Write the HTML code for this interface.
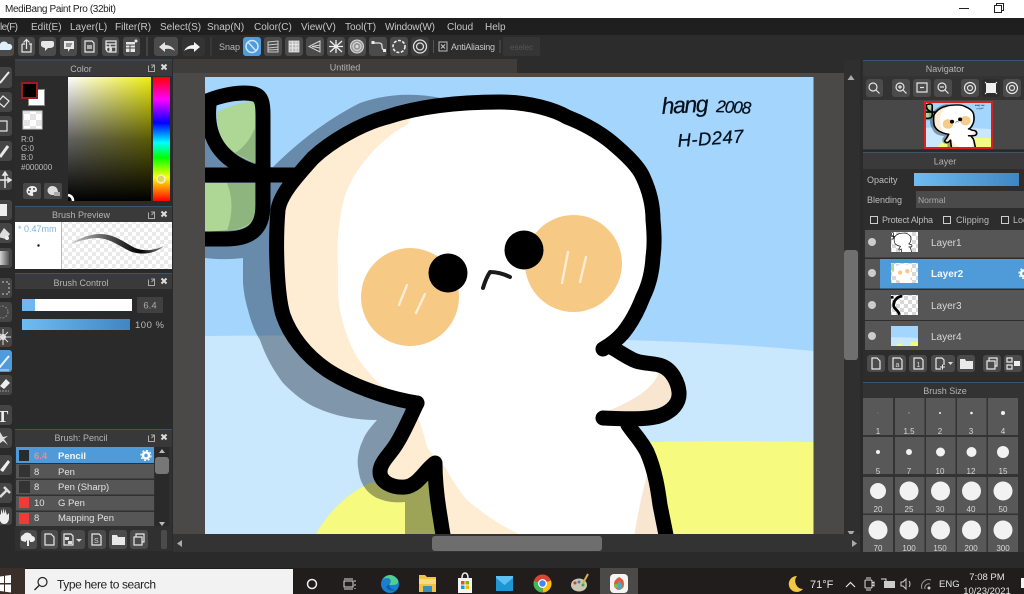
<!DOCTYPE html>
<html lang="en"><head><meta charset="utf-8"><title>MediBang Paint Pro</title>
<style>
html,body{margin:0;padding:0;background:#2a2a2a;width:1024px;height:594px;overflow:hidden}
svg{display:block;filter:blur(.35px);font-family:"Liberation Sans",sans-serif}
.m{font-size:10px;fill:#c6c6c6}
.h{font-size:9px;fill:#b4b4b4;text-anchor:middle}
.l{font-size:9px;fill:#bdbdbd}
.n{font-size:9.5px;fill:#e2e2e2}
.s{font-size:8px;fill:#d8d8d8;text-anchor:middle}
.b{fill:#4b4b4b}
.w{fill:none;stroke:#e8e8e8;stroke-width:1.2}
.f{fill:#e8e8e8}
</style></head><body>
<svg width="1024" height="594" viewBox="0 0 1024 594" xmlns="http://www.w3.org/2000/svg">
<defs>
<pattern id="chk" width="12" height="12" patternUnits="userSpaceOnUse"><rect width="12" height="12" fill="#fff"/><rect width="6" height="6" fill="#e4e4e4"/><rect x="6" y="6" width="6" height="6" fill="#e4e4e4"/></pattern>
<pattern id="chk2" width="8" height="8" patternUnits="userSpaceOnUse"><rect width="8" height="8" fill="#fff"/><rect width="4" height="4" fill="#d8d8d8"/><rect x="4" y="4" width="4" height="4" fill="#d8d8d8"/></pattern>
<linearGradient id="sv1"><stop offset="0" stop-color="#fff"/><stop offset="1" stop-color="#eeee10"/></linearGradient>
<linearGradient id="sv2" x2="0" y2="1"><stop offset="0" stop-color="#000" stop-opacity="0"/><stop offset=".5" stop-color="#000" stop-opacity=".62"/><stop offset="1" stop-color="#000"/></linearGradient>
<linearGradient id="hue" x2="0" y2="1"><stop offset="0" stop-color="#f00"/><stop offset=".18" stop-color="#f0f"/><stop offset=".37" stop-color="#00f"/><stop offset=".53" stop-color="#0ff"/><stop offset=".65" stop-color="#0f0"/><stop offset=".81" stop-color="#ff0"/><stop offset="1" stop-color="#f00"/></linearGradient>
<linearGradient id="blu"><stop offset="0" stop-color="#6fbcf2"/><stop offset="1" stop-color="#3f86c4"/></linearGradient>
<linearGradient id="strk"><stop offset="0" stop-color="#ccc"/><stop offset=".4" stop-color="#555"/><stop offset=".75" stop-color="#000"/><stop offset="1" stop-color="#888"/></linearGradient>
<linearGradient id="gr" x2="1" y2="0"><stop offset="0" stop-color="#eee"/><stop offset="1" stop-color="#555"/></linearGradient>
<clipPath id="cv"><rect x="205" y="77" width="608.5" height="457"/></clipPath>
<clipPath id="bodyc"><use href="#body"/></clipPath>
<path id="body" d="M417 403C385 398 350 385 327 370C305 355 290 335 283 315C277 295 275 245 278 210C280 195 295 178 313 158C330 142 360 124 387 117C420 106 460 102 500 102C530 102 555 110 567 117C590 126 605 136 617 147C632 160 640 170 643 177C650 192 653 205 653 220C655 240 654 250 653 257C652 275 648 287 643 297C638 310 632 322 623 333C617 340 610 345 603 349L611 347C620 352 628 358 636 361C645 364 655 363 662 366C672 370 678 382 679 392C680 403 672 411 662 415C650 420 625 419 603 418L628 425C635 435 642 442 647 452C655 470 658 490 660 505C662 515 664 525 667 540L444 540L439 510L435 463C425 470 418 486 405 487C392 488 380 482 380 472C380 462 390 455 397 443C405 430 412 413 417 403Z"/>
<path id="shad" d="M445 99C415 92 385 94 360 103C330 118 300 140 273 167L262 167L205 130L205 258C220 260 235 259 243 258L243 283C244 295 246 303 248 310C251 322 255 332 260 340C267 360 275 372 283 383C295 395 305 403 317 408C335 416 355 420 377 420C370 428 365 434 363 440C358 450 357 460 358 467C359 474 360 479 362 483C366 491 371 495 377 498C386 502 395 503 405 502L405 540L450 540L500 300Z"/>
<g id="bg"><rect x="205" y="77" width="609" height="460" fill="#a3d5fd"/><path d="M205 336C300 335 400 335 500 336C560 337 600 339 627 340C660 341 690 342 720 344C760 346 790 349 814 351V540H205Z" fill="#c9e7fd"/><path d="M650 442C700 441 760 441 814 442V540H640ZM313 540C325 515 345 495 370 483L460 480L450 540Z" fill="#f6fb80"/></g>
<g id="lines" fill="none" stroke="#000" stroke-width="15" stroke-linecap="round" stroke-linejoin="round">
<path d="M417 403C385 398 350 385 327 370C305 355 290 335 283 315C277 295 275 245 278 210C280 195 295 178 313 158C330 142 360 124 387 117C420 106 460 102 500 102C530 102 555 110 567 117C590 126 605 136 617 147C632 160 640 170 643 177C650 192 653 205 653 220C655 240 654 250 653 257C652 275 648 287 643 297C638 310 632 322 623 333C617 340 610 345 603 349"/>
<path d="M611 347C620 352 628 358 636 361C645 364 655 363 662 366C672 370 678 382 679 392C680 403 672 411 662 415C650 420 625 419 603 418"/>
<path d="M628 425C635 435 642 442 647 452C655 470 658 490 660 505C662 515 664 525 667 540"/>
<path d="M417 403C412 413 405 430 397 443C390 455 380 462 380 472C380 482 392 488 405 487C418 486 425 470 435 463C435 480 437 497 439 510C441 522 442 530 444 540"/>
<path d="M198 105C225 92 245 92 254 94C262 96 263 104 263 115V205C263 230 250 239 225 239H198"/>
<path d="M198 175H296" stroke-linecap="butt"/>
<path d="M209 105C206 135 218 160 255 172"/>
</g>
<g id="art" clip-path="url(#cv)">
<use href="#bg"/>
<use href="#shad" fill="#a3a7ad" style="mix-blend-mode:multiply"/>
<path d="M217 112Q236 103 255 101V163Q232 155 222 140Q217 128 217 112Z" fill="#aed695"/>
<path d="M255 128V163L235 153Q248 145 255 128Z" fill="#8eb57e"/>
<path d="M200 183H255V217Q250 228 235 230L200 232Z" fill="#aed695"/>
<path d="M227 183H255V217Q250 228 227 231Q236 205 227 183Z" fill="#8eb57e"/>
<use href="#body" fill="#fff"/>
<g clip-path="url(#bodyc)">
<path d="M407 125C385 135 350 170 343 203C337 230 337 250 338 270C338 290 338 300 340 310C344 330 350 345 357 357C367 372 377 382 387 390C400 398 410 408 418 417C423 430 425 440 427 447C433 456 440 462 445 467C452 480 460 492 467 500C485 515 500 525 517 533L520 545H240V100H420Z" fill="#feecd3"/>
<path d="M633 545C636 520 642 495 648 470L690 545Z" fill="#f8e6d0"/>
<path d="M659 372C655 385 640 398 608 411L690 418V370Z" fill="#f8e6d0"/>
</g>
<circle cx="410" cy="297" r="49" fill="#f6c985"/><circle cx="573.5" cy="263.5" r="48.5" fill="#f6c985"/>
<path d="M407 285L399 305M425 294L416 313M568 252L562 283M586 257L580 282" stroke="#feecd3" stroke-width="2.4" stroke-linecap="round" fill="none"/>
<circle cx="448" cy="273" r="19.5"/><circle cx="524" cy="250" r="19.5"/>
<path d="M483 288Q486 278 490 272Q500 272 510 277" fill="none" stroke="#1a1a1a" stroke-width="4" stroke-linecap="round" stroke-linejoin="round"/>
<use href="#lines"/>
<g fill="#06101c" font-family="'Liberation Sans',sans-serif" font-style="italic" stroke="#06101c" stroke-width=".25">
<text x="662" y="114" font-size="23" textLength="47" transform="rotate(-3 662 114)">hang</text>
<text x="716" y="112" font-size="17" textLength="35" transform="rotate(3 716 112)">2008</text>
<text x="678" y="147" font-size="18.500" textLength="66" transform="rotate(-4 678 147)">H-D247</text>
</g>
</g>
</defs>

<!-- base -->
<rect width="1024" height="594" fill="#2a2a2a"/>
<rect width="1024" height="18" fill="#fff"/>
<text x="5" y="12" font-size="10" fill="#222" textLength="111">MediBang Paint Pro (32bit)</text>
<path d="M959 8.5h10" stroke="#222" stroke-width="1"/>
<path d="M994.5 5.5h7v7h-7zM996.5 5.500v-2h7v7h-2" fill="none" stroke="#222"/>
<rect y="18" width="1024" height="17" fill="#201f1f"/>
<g class="m"><text x="0" y="30" class="m" textLength="18">le(F)</text><text x="31" y="30" class="m">Edit(E)</text><text x="70" y="30" class="m">Layer(L)</text><text x="115" y="30" class="m">Filter(R)</text><text x="160" y="30" class="m">Select(S)</text><text x="207" y="30" class="m">Snap(N)</text><text x="254" y="30" class="m">Color(C)</text><text x="301" y="30" class="m">View(V)</text><text x="345" y="30" class="m">Tool(T)</text><text x="385" y="30" class="m" textLength="50">Window(W)</text><text x="447" y="30" class="m">Cloud</text><text x="485" y="30" class="m">Help</text></g>

<!-- toolbar -->
<rect y="35" width="1024" height="24" fill="#2d2c2c"/>
<g class="b"><rect x="-4" y="37" width="18" height="19" rx="3"/><rect x="18" y="37" width="17" height="19" rx="3"/><rect x="39" y="37" width="17" height="19" rx="3"/><rect x="60" y="37" width="17" height="19" rx="3"/><rect x="81" y="37" width="17" height="19" rx="3"/><rect x="102" y="37" width="17" height="19" rx="3"/><rect x="123" y="37" width="17" height="19" rx="3"/><rect x="154" y="37" width="24" height="19" rx="3"/><rect x="182" y="37" width="23" height="19" rx="3" fill="#333"/><rect x="264" y="37" width="18" height="19" rx="3"/><rect x="285" y="37" width="18" height="19" rx="3"/><rect x="306" y="37" width="18" height="19" rx="3"/><rect x="327" y="37" width="18" height="19" rx="3"/><rect x="348" y="37" width="18" height="19" rx="3"/><rect x="369" y="37" width="18" height="19" rx="3"/><rect x="390" y="37" width="18" height="19" rx="3"/><rect x="411" y="37" width="18" height="19" rx="3" fill="#3a3a3a"/></g>
<rect x="243" y="37" width="18" height="19" rx="3" fill="#4f9bdb"/>
<path d="M-1 50a3 3 0 0 1 1-6a4.500 4.500 0 0 1 8 0a3 3 0 0 1 2 6z" fill="#dff0fc"/>
<path d="M22 44h3M32 44h-3v0M22 44v8h9v-8M26.500 49v-9M23.500 42.500l3-3l3 3" class="w"/>
<path d="M43 42h9q2 0 2 2v2q0 3-5 3h-1l-3 3v-3q-4-1-4-3v-2q0-2 2-2z" class="f" transform="translate(0,-1)"/>
<path d="M64 41h10v8h-4l-2 3v-3h-4z" class="f"/><path d="M66 44h6M66 46h5" stroke="#444"/>
<path d="M85 41h7l2 2v9h-9zM87 46h5M87 48h5" class="w"/>
<path d="M106 41h10v3h-10zM106 44v6M110 44v8h6v-8M106 47h10M109 52a2.500 2.500 0 1 0-.1 0" class="w"/>
<path d="M126 42h9v10h-9z" class="f"/><path d="M126 45h9M130 45v7M126 48h9" stroke="#444"/><circle cx="136" cy="41" r="1.500" class="f"/>
<path d="M159 47l6-5v3q7 0 10 6q-4-3-10-2v3z" fill="#e4e4e4"/>
<path d="M200 47l-6-5v3q-7 0-10 6q4-3 10-2v3z" fill="#f4f4f4"/>
<path d="M146.500 37v19M147.500 37v19M211 37v19" stroke="#444"/>
<text x="219" y="50" font-size="9" fill="#b8b8b8">Snap</text>
<circle cx="252" cy="46.500" r="6" fill="none" stroke="#cfe6f8" stroke-width="1.500"/><path d="M248 42l8 9" stroke="#cfe6f8" stroke-width="1.500"/>
<path d="M268 42l10-1v11h-10zM268 45l10-1M268 48l10-1M268 50l10-.500" fill="none" stroke="#ccc"/>
<path d="M289 41h10v11h-10zM289 44.500h10M289 48h10M292.500 41v11M296 41v11" fill="#bbb" stroke="#eee" stroke-width=".8"/>
<path d="M320 41l-11 5.500l11 5.500zM320 45l-8 1.500l8 1.500" fill="none" stroke="#d8d8d8"/>
<path d="M330 41l12 11M342 41l-12 11M336 40v13M329 46.500h14" stroke="#eee" stroke-width="1.300"/>
<circle cx="357" cy="46.500" r="6.500" fill="#999" stroke="#ddd"/><circle cx="357" cy="46.500" r="4" fill="none" stroke="#ddd"/><circle cx="357" cy="46.500" r="1.500" fill="#ddd"/>
<path d="M373 43h6q3 0 3 3v1q0 3 3 3h0" fill="none" stroke="#ddd" stroke-width="1.300"/><rect x="371.500" y="41" width="3" height="3" fill="#eee"/><rect x="383" y="49" width="3" height="3" fill="#eee"/>
<circle cx="399" cy="46.500" r="6" fill="none" stroke="#eee" stroke-width="1.600" stroke-dasharray="3 1.500"/>
<circle cx="420" cy="46.500" r="6.500" fill="none" stroke="#ddd" stroke-width="1.300"/><circle cx="420" cy="46.500" r="3.500" fill="none" stroke="#ddd" stroke-width="1.300"/>
<path d="M433.500 40v13M500 40v13" stroke="#555"/>
<rect x="439" y="42" width="8" height="9" fill="none" stroke="#bbb"/><path d="M441 44.500l4 4M445 44.500l-4 4" stroke="#ccc"/>
<text x="451" y="50" font-size="9" fill="#c4c4c4" textLength="44">AntiAliasing</text>
<rect x="503" y="37" width="37" height="19" rx="2" fill="#353535"/>
<text x="510" y="50" font-size="8" fill="#555">eselec</text>

<!-- left tool strip -->
<g fill="#454545">
<rect x="-6" y="67" width="18" height="21" rx="3"/><rect x="-6" y="92" width="18" height="20" rx="3"/><rect x="-6" y="116" width="18" height="20" rx="3"/><rect x="-6" y="141" width="18" height="20" rx="3"/><rect x="-6" y="170" width="18" height="20" rx="3"/><rect x="-6" y="200" width="18" height="20" rx="3"/><rect x="-6" y="223" width="18" height="20" rx="3"/><rect x="-6" y="248" width="18" height="20" rx="3"/><rect x="-6" y="278" width="18" height="20" rx="3"/><rect x="-6" y="302" width="18" height="20" rx="3"/><rect x="-6" y="327" width="18" height="20" rx="3"/><rect x="-6" y="375" width="18" height="20" rx="3"/><rect x="-6" y="405" width="18" height="20" rx="3"/><rect x="-6" y="428" width="18" height="20" rx="3"/><rect x="-6" y="455" width="18" height="20" rx="3"/><rect x="-6" y="483" width="18" height="20" rx="3"/><rect x="-6" y="507" width="18" height="18" rx="3"/>
</g>
<rect x="-6" y="350" width="18" height="22" rx="3" fill="#4f9bdb"/>
<path d="M0 83L9 72" stroke="#e8e8e8" stroke-width="2"/>
<path d="M-2 102l5-6l6 5l-5 6z" class="w"/>
<rect x="-2" y="121" width="9" height="10" class="w"/>
<path d="M0 157L8 146" stroke="#e8e8e8" stroke-width="3"/>
<path d="M5 172v16M-3 180h14M5 172l-2 3h4zM11 180l-3-2v4z" stroke="#e8e8e8" stroke-width="1.500" fill="#e8e8e8"/>
<rect x="-2" y="204" width="9" height="12" fill="#eee"/>
<path d="M-2 237l6-9l6 6l-4 5q-4-1-8-2z" fill="#ddd"/><circle cx="7" cy="238" r="2" fill="#eee"/>
<rect x="-2" y="251" width="11" height="14" fill="url(#gr)"/>
<rect x="-2" y="282" width="11" height="12" fill="none" stroke="#ccc" stroke-dasharray="2 2"/>
<circle cx="2" cy="312" r="6" fill="none" stroke="#888" stroke-dasharray="2 1.500"/>
<circle cx="3" cy="337" r="3" fill="#eee"/><path d="M3 329v16M-5 337h16M-2 332l10 10M8 332l-10 10" stroke="#ddd"/>
<path d="M-1 368L9 356" stroke="#e8f4fd" stroke-width="2"/><path d="M-1 370h10" stroke="#cfe6f8"/>
<path d="M0 386l6-7l4 4l-6 6z" fill="#eee"/><path d="M-1 391h10" stroke="#999" stroke-dasharray="2 1"/>
<text x="-3" y="422" font-size="17" font-weight="bold" font-family="'Liberation Serif',serif" fill="#eee">T</text>
<path d="M0 432l3 5l5-1l-4 3l4 6l-5-4l-4 3l1-5z" fill="#ddd"/>
<path d="M0 470L8 460l2 2l-7 10z" fill="#eee"/>
<path d="M0 497l7-7M4 487l6 6" stroke="#ddd" stroke-width="2.500"/>
<path d="M-1 517v-5l2 3v-6l2 5v-6l2 6v-5l2 6l2-2v6q-1 5-5 5q-4 0-5-7z" fill="#eee"/>

<!-- Color panel -->
<rect x="15" y="59" width="157" height="149" fill="#2b2b2b"/>
<rect x="15" y="60" width="157" height="16" fill="#3a3a3a"/>
<path d="M15 60h157" stroke="#3c556b"/>
<text x="81" y="72" class="h">Color</text>
<g id="pi"><path d="M148.500 65.500v6h6v-3M151 65h3.500v3.500M154.500 65l-3 3" fill="none" stroke="#aaa"/><path d="M161.500 64.500l5 5M166.500 64.500l-5 5" stroke="#ddd" stroke-width="2"/></g>
<rect x="28.500" y="89.500" width="16" height="16" fill="#fff" stroke="#888"/>
<rect x="22" y="83" width="15" height="15" fill="#000" stroke="#a11a1a" stroke-width="2"/>
<rect x="23" y="111" width="19" height="18" fill="url(#chk)" stroke="#ccc"/>
<g class="l" font-size="8"><text x="21" y="142" font-size="8" fill="#bbb">R:0</text><text x="21" y="151" font-size="8" fill="#bbb">G:0</text><text x="21" y="160" font-size="8" fill="#bbb">B:0</text><text x="21" y="170" font-size="8" fill="#bbb">#000000</text></g>
<rect x="23" y="183" width="18" height="16" rx="2" fill="#484848"/><rect x="44" y="183" width="18" height="16" rx="2" fill="#484848"/>
<path d="M32 186a5.500 5 0 1 0 0 10q2 0 1-2t2-2q2 0 2-2q0-4-5-4z" fill="#eee"/><circle cx="30" cy="189" r="1" fill="#444"/><circle cx="34" cy="189" r="1" fill="#444"/><circle cx="29" cy="192" r="1" fill="#444"/>
<path d="M52 186a4.500 4.500 0 1 0 0 9h2v-2h4q0-7-6-7z" fill="#ddd"/><rect x="54" y="192" width="6" height="4" fill="#aaa"/>
<rect x="68" y="77" width="83" height="124" fill="url(#sv1)"/><rect x="68" y="77" width="83" height="124" fill="url(#sv2)"/>
<rect x="153" y="77" width="17" height="124" fill="url(#hue)"/>
<circle cx="161" cy="179" r="4" fill="#dcd85a" stroke="#f2f2f2" stroke-width="1.200"/>
<path d="M68 195q5 1 5 6" fill="none" stroke="#fff" stroke-width="2.500"/>

<!-- Brush Preview -->
<rect x="15" y="206" width="157" height="16" fill="#3a3a3a"/><path d="M15 206.500h157" stroke="#3c556b"/>
<text x="81" y="218" class="h">Brush Preview</text><use href="#pi" y="147"/>
<rect x="15" y="222" width="157" height="47" fill="#fff"/>
<rect x="62" y="222" width="110" height="47" fill="url(#chk2)" opacity=".55"/><path d="M61.500 222v47" stroke="#bbb"/>
<text x="18" y="232" font-size="9" fill="#7fb4dd">* 0.47mm</text>
<circle cx="38.500" cy="245.500" r="1.200" fill="#111"/>
<path d="M70 244C80 238 90 234 100 234C115 234 125 243 135 248C145 252 155 250 164 246C155 254 142 255 132 252C120 247 112 239 98 238C88 238 80 241 70 244Z" fill="url(#strk)"/>

<!-- Brush control -->
<rect x="15" y="273" width="157" height="16" fill="#3a3a3a"/><path d="M15 273.500h157" stroke="#3c556b"/>
<text x="81" y="286" class="h">Brush Control</text><use href="#pi" y="214"/>
<rect x="22" y="299" width="110" height="12" fill="#fff"/><rect x="22" y="299" width="13" height="12" fill="#6fb8ef"/>
<rect x="137" y="297" width="26" height="16" rx="1" fill="#404040"/><text x="150" y="308.500" font-size="9.500" fill="#aaa" text-anchor="middle">6.4</text>
<rect x="22" y="319" width="108" height="11" fill="url(#blu)"/><text x="135" y="328" font-size="9.500" fill="#bbb" letter-spacing=".5">100 %</text>

<!-- Brush list -->
<rect x="15" y="429" width="157" height="122" fill="#303030"/>
<path d="M15 429.500h157" stroke="#3c556b"/><rect x="15" y="430" width="157" height="17" fill="#383838"/>
<text x="81" y="441" class="h">Brush: Pencil</text><use href="#pi" y="370"/>
<rect x="16" y="447" width="138" height="16" fill="#4f9bd9"/>
<g fill="#565656"><rect x="16" y="464" width="138" height="14.500"/><rect x="16" y="480" width="138" height="14.500"/><rect x="16" y="496" width="138" height="14.500"/><rect x="16" y="512" width="138" height="14"/></g>
<g><rect x="19" y="450" width="10" height="11" fill="#2a2a2a"/><rect x="19" y="465" width="11" height="12" fill="#333"/><rect x="19" y="481" width="11" height="12" fill="#333"/><rect x="19" y="497" width="10" height="11" fill="#f03a3a"/><rect x="19" y="513" width="10" height="11" fill="#f03a3a"/></g>
<text x="34" y="459" font-size="9.500" font-weight="bold" fill="#e88b96">6.4</text><text x="58" y="459" font-size="9.500" font-weight="bold" fill="#eef6fc">Pencil</text>
<text x="34" y="475" class="n">8</text><text x="58" y="475" class="n">Pen</text>
<text x="34" y="490" class="n">8</text><text x="58" y="490" class="n">Pen (Sharp)</text>
<text x="34" y="506" class="n">10</text><text x="58" y="506" class="n">G Pen</text>
<text x="34" y="521" class="n">8</text><text x="58" y="521" class="n">Mapping Pen</text>
<circle cx="146" cy="455.500" r="3" fill="none" stroke="#fff" stroke-width="2.500"/><circle cx="146" cy="455.500" r="5" fill="none" stroke="#fff" stroke-width="1.200" stroke-dasharray="2 1.900"/>
<rect x="155" y="447" width="14" height="79" fill="#2a2a2a"/><rect x="155" y="457" width="14" height="17" rx="3" fill="#777"/>
<path d="M162 449l-3 4h6zM162 526l-3-4h6z" fill="#bbb"/>
<g class="b"><rect x="20" y="530" width="17" height="19" rx="3"/><rect x="41" y="530" width="17" height="19" rx="3"/><rect x="61" y="530" width="24" height="19" rx="3"/><rect x="88" y="530" width="18" height="19" rx="3"/><rect x="109" y="530" width="18" height="19" rx="3"/><rect x="130" y="530" width="18" height="19" rx="3"/><rect x="161" y="530" width="6" height="19" rx="2"/></g>
<path d="M22 541a3.500 3.500 0 0 1 1-6a5 5 0 0 1 9 1a3 3 0 0 1 0 6h-2v-1l-2-2l-2 2v1z" fill="#eee"/><path d="M28 538v8" stroke="#eee" stroke-width="2"/>
<path d="M45 534h6l3 3v8h-9z" class="w"/>
<path d="M64 534h7l2 2v9h-9z" class="w"/><rect x="65" y="537" width="4" height="3" fill="#ddd"/><rect x="68" y="541" width="4" height="3" fill="#ddd"/><path d="M76 539h6l-3 3z" fill="#ddd"/>
<path d="M92 534h7l2 2v9h-9z" class="w"/><text x="94" y="543" font-size="7" fill="#ddd">S</text>
<path d="M112 535h5l1 2h7v8h-13z" class="f"/>
<rect x="134" y="537" width="8" height="8" class="w"/><path d="M136 537v-3h8v8h-2" class="w"/>

<!-- centre -->
<rect x="173" y="59" width="687" height="15" fill="#2c2c2c"/>
<rect x="173" y="59" width="344" height="14" fill="#3e3d3c"/>
<text x="345" y="70.500" class="h" font-size="8.500">Untitled</text>
<rect x="173" y="73" width="671" height="461" fill="#4a4948"/>
<use href="#art"/>
<rect x="844" y="60" width="16" height="492" fill="#2f2f2f"/>
<rect x="844" y="250" width="14" height="110" rx="3" fill="#6f6f6f"/>
<path d="M851 75l-3.500 5h7zM851 536l-3.500-5h7z" fill="#aaa"/>
<rect x="173" y="534" width="687" height="18" fill="#333"/>
<rect x="432" y="536" width="170" height="15" rx="3" fill="#6e6e6e"/>
<path d="M177 543.500l5-3.500v7zM857 543.500l-5-3.500v7z" fill="#aaa"/>

<!-- Navigator -->
<rect x="863" y="60" width="161" height="90" fill="#333"/><path d="M863 60.500h161" stroke="#3c556b"/>
<rect x="863" y="61" width="161" height="15" fill="#383838"/>
<text x="945" y="72" class="h">Navigator</text>
<g class="b"><rect x="866" y="79" width="17" height="18" rx="3"/><rect x="892" y="79" width="18" height="18" rx="3"/><rect x="913" y="79" width="18" height="18" rx="3"/><rect x="934" y="79" width="18" height="18" rx="3"/><rect x="961" y="79" width="18" height="18" rx="3"/><rect x="982" y="79" width="18" height="18" rx="3" fill="#2d2d2d"/><rect x="1003" y="79" width="18" height="18" rx="3"/></g>
<g fill="none" stroke="#e4e4e4" stroke-width="1.200"><circle cx="873" cy="87" r="4"/><path d="M876 90l3.500 3.500"/><circle cx="900" cy="87" r="4"/><path d="M903 90l3.500 3.500M898 87h4M900 85v4"/><circle cx="942" cy="87" r="4"/><path d="M945 90l3.500 3.500M940 87h4"/><path d="M917 83h10v9h-10zM920 87.500h4"/><circle cx="970" cy="88" r="5.500"/><circle cx="970" cy="88" r="2.500"/><circle cx="1012" cy="88" r="5.500"/><circle cx="1012" cy="88" r="2.500"/></g>
<rect x="986" y="83" width="10" height="10" fill="#eee"/><path d="M985 82l3 3M997 82l-3 3M985 94l3-3M997 94l-3-3" stroke="#eee"/>
<rect x="863" y="100" width="161" height="49" fill="#484848"/>
<use href="#art" transform="translate(926 102.500) scale(.107 .0975) translate(-205 -77)"/>
<rect x="925" y="102" width="67" height="46" fill="none" stroke="#d82020" stroke-width="2"/>

<!-- Layer panel -->
<rect x="863" y="152" width="161" height="228" fill="#2d2d2d"/><path d="M863 152.500h161" stroke="#3c556b"/>
<rect x="863" y="153" width="161" height="16" fill="#3a3a3a"/>
<text x="945" y="164.500" class="h">Layer</text>
<text x="867" y="183" class="l">Opacity</text><rect x="914" y="173" width="105" height="13" fill="url(#blu)"/>
<text x="867" y="203" class="l">Blending</text><rect x="916" y="191" width="108" height="17" fill="#4a4a4a"/><text x="918" y="203" font-size="8.500" fill="#aaa">Normal</text>
<g fill="none" stroke="#ccc"><rect x="870.500" y="216.500" width="7" height="7"/><rect x="943.500" y="216.500" width="7" height="7"/><rect x="1001.500" y="216.500" width="7" height="7"/></g>
<text x="882" y="223" class="l" textLength="51">Protect Alpha</text><text x="956" y="223" class="l" textLength="33">Clipping</text><text x="1013" y="223" class="l">Lock</text>
<g fill="#565656"><rect x="865" y="230" width="159" height="27.500"/><rect x="865" y="259" width="159" height="29.500"/><rect x="865" y="290" width="159" height="30"/><rect x="865" y="321" width="159" height="29"/></g>
<rect x="880" y="259" width="144" height="29.500" fill="#4f9bd9"/>
<g fill="#ccc"><circle cx="872" cy="242" r="4"/><circle cx="872" cy="273" r="4"/><circle cx="872" cy="305" r="4"/><circle cx="872" cy="336" r="4"/></g>
<g fill="url(#chk2)"><rect x="891" y="232" width="27" height="20"/><rect x="891" y="263" width="27" height="20"/><rect x="891" y="295" width="27" height="20"/></g>
<g transform="translate(891 232) scale(.0444 .0438) translate(-205 -77)"><g clip-path="url(#cv)"><use href="#body" fill="#fff"/><use href="#lines"/></g></g>
<g transform="translate(891 263) scale(.0444 .0438) translate(-205 -77)"><g clip-path="url(#cv)"><use href="#body" fill="#fff"/><circle cx="410" cy="297" r="49" fill="#f6c985"/><circle cx="573" cy="263" r="49" fill="#f6c985"/><path d="M205 90H270V245H205Z" fill="#aed695"/></g></g>
<g transform="translate(891 295) scale(.0444 .0438) translate(-205 -77)"><g clip-path="url(#cv)"><path d="M205 130H262M460 100C340 115 255 210 265 330C285 410 375 420 395 530" fill="none" stroke="#000" stroke-width="62"/></g></g>
<g transform="translate(891 326) scale(.0444 .0438) translate(-205 -77)"><use href="#bg" clip-path="url(#cv)"/></g>
<g font-size="10" fill="#d8d8d8"><text x="931" y="246">Layer1</text><text x="931" y="277" font-weight="bold" fill="#f2f8fd">Layer2</text><text x="931" y="309">Layer3</text><text x="931" y="340">Layer4</text></g>
<circle cx="1024" cy="273.500" r="3" fill="none" stroke="#fff" stroke-width="2.500"/><circle cx="1024" cy="273.500" r="5" fill="none" stroke="#fff" stroke-width="1.200" stroke-dasharray="2 1.900"/>
<g class="b"><rect x="867" y="355" width="18" height="17" rx="3"/><rect x="888" y="355" width="18" height="17" rx="3"/><rect x="909" y="355" width="18" height="17" rx="3"/><rect x="931" y="355" width="24" height="17" rx="3"/><rect x="957" y="355" width="18" height="17" rx="3"/><rect x="983" y="355" width="18" height="17" rx="3"/><rect x="1004" y="355" width="18" height="17" rx="3"/></g>
<path d="M872 358h5l3 3v8h-8zM893 358h7l2 2v9h-9zM914 358h7l2 2v9h-9zM936 358h6l2 2v5M936 358v11h5" class="w"/>
<text x="895.500" y="367" font-size="7" fill="#ddd">a</text><text x="916.500" y="367" font-size="7" fill="#ddd">1</text>
<path d="M940 367h5M942.500 364.500v5" stroke="#eee"/><path d="M948 362h5l-2.500 3z" fill="#ddd"/>
<path d="M960 359h5l1 2h7v8h-13z" class="f"/>
<rect x="987" y="361" width="8" height="8" class="w"/><path d="M989 361v-3h8v8h-2" class="w"/>
<path d="M1007 358h5v4h-5zM1007 365h5v4h-5z" class="w"/><rect x="1014" y="361" width="6" height="5" fill="#eee"/>

<!-- Brush size -->
<rect x="863" y="382" width="161" height="170" fill="#333"/><path d="M863 382.500h161" stroke="#3c556b"/>
<text x="945" y="394" class="h">Brush Size</text>
<g fill="#585858">
<rect x="863" y="398" width="30" height="37"/><rect x="895" y="398" width="29.500" height="37"/><rect x="926" y="398" width="29.500" height="37"/><rect x="957" y="398" width="29.500" height="37"/><rect x="988" y="398" width="30" height="37"/>
<rect x="863" y="437" width="30" height="37"/><rect x="895" y="437" width="29.500" height="37"/><rect x="926" y="437" width="29.500" height="37"/><rect x="957" y="437" width="29.500" height="37"/><rect x="988" y="437" width="30" height="37"/>
<rect x="863" y="477" width="30" height="36.500"/><rect x="895" y="477" width="29.500" height="36.500"/><rect x="926" y="477" width="29.500" height="36.500"/><rect x="957" y="477" width="29.500" height="36.500"/><rect x="988" y="477" width="30" height="36.500"/>
<rect x="863" y="515" width="30" height="37"/><rect x="895" y="515" width="29.500" height="37"/><rect x="926" y="515" width="29.500" height="37"/><rect x="957" y="515" width="29.500" height="37"/><rect x="988" y="515" width="30" height="37"/>
</g>
<g fill="#f2f2f2">
<circle cx="878" cy="413" r=".5" opacity=".4"/><circle cx="909" cy="413" r=".7" opacity=".5"/><circle cx="940" cy="413" r="1"/><circle cx="971.500" cy="413" r="1.300"/><circle cx="1003" cy="413" r="2"/>
<circle cx="878" cy="452" r="2"/><circle cx="909" cy="452" r="3"/><circle cx="940.500" cy="452" r="4.500"/><circle cx="971.500" cy="452" r="5"/><circle cx="1003" cy="452" r="6"/>
<circle cx="878" cy="491" r="8"/><circle cx="909" cy="491" r="9.500"/><circle cx="940.500" cy="491" r="9.500"/><circle cx="971.500" cy="491" r="9.500"/><circle cx="1003" cy="491" r="9.500"/>
<circle cx="878" cy="530" r="9.500"/><circle cx="909" cy="530" r="9.500"/><circle cx="940.500" cy="530" r="9.500"/><circle cx="971.500" cy="530" r="9.500"/><circle cx="1003" cy="530" r="9.500"/>
</g>
<text x="878" y="434" class="s">1</text><text x="909" y="434" class="s">1.5</text><text x="940" y="434" class="s">2</text><text x="971" y="434" class="s">3</text><text x="1003" y="434" class="s">4</text>
<text x="878" y="474" class="s">5</text><text x="909" y="474" class="s">7</text><text x="940" y="474" class="s">10</text><text x="971" y="474" class="s">12</text><text x="1003" y="474" class="s">15</text>
<text x="878" y="512" class="s">20</text><text x="909" y="512" class="s">25</text><text x="940" y="512" class="s">30</text><text x="971" y="512" class="s">40</text><text x="1003" y="512" class="s">50</text>
<text x="878" y="551" class="s">70</text><text x="909" y="551" class="s">100</text><text x="940" y="551" class="s">150</text><text x="971" y="551" class="s">200</text><text x="1003" y="551" class="s">300</text>

<!-- taskbar -->
<rect y="568" width="1024" height="26" fill="#201d1c"/>
<rect y="568" width="25" height="26" fill="#3b2f2a"/>
<path d="M0 576.500l4-.5v7H0zM5 575.800l6-.800v8H5zM0 584.500h4v7l-4-.5zM5 584.500h6v8l-6-.800z" fill="#fff"/>
<rect x="25" y="569" width="268" height="25" fill="#f2f2f2"/>
<circle cx="42.500" cy="582" r="4.500" fill="none" stroke="#222" stroke-width="1.200"/><path d="M39 585.500l-4.500 4.500" stroke="#222" stroke-width="1.300"/>
<text x="57" y="588.500" font-size="12" fill="#222" textLength="99">Type here to search</text>
<circle cx="312" cy="584" r="4.500" fill="none" stroke="#eee" stroke-width="1.500"/>
<path d="M344 579h9M344 589h9M344 581h9v6h-9zM355 580v2M355 584v2M355 588v1" fill="none" stroke="#ddd"/>
<circle cx="390" cy="584" r="9" fill="#1a7fd0"/><path d="M382 580q8-10 16 0q1 5-5 5h-4q4-5-1-7q-4 0-6 2z" fill="#4fd18b"/><path d="M386 587q3 5 10 3q-6 0-7-6z" fill="#0f5fa8"/>
<path d="M419 575h6l2 2h9v15h-17z" fill="#f3c33f"/><rect x="419" y="579" width="17" height="5" fill="#f8dc7c"/><rect x="423" y="586" width="9" height="6" fill="#3f8fb4"/>
<path d="M458 578h14v15h-14z" fill="#f4f4f4"/><path d="M462 578q0-5 3-5t3 5" fill="none" stroke="#eee" stroke-width="1.500"/>
<rect x="461" y="581" width="3.500" height="3.500" fill="#e8501f"/><rect x="465.500" y="581" width="3.500" height="3.500" fill="#7fba00"/><rect x="461" y="585.500" width="3.500" height="3.500" fill="#00a4ef"/><rect x="465.500" y="585.500" width="3.500" height="3.500" fill="#ffb900"/>
<rect x="496" y="578" width="17" height="13" fill="#1f95d8"/><path d="M496 578l8.500 7l8.500-7v-2h-17z" fill="#5cc0f0"/>
<circle cx="542.500" cy="583.500" r="9" fill="#db4437"/><path d="M542.500 583.500l8.500-3a9 9 0 0 1-8 12z" fill="#f4c20d"/><path d="M542.500 583.500l0 9a9 9 0 0 1-8.500-11.500z" fill="#3cba54"/><circle cx="542.500" cy="583.500" r="4.500" fill="#fff"/><circle cx="542.500" cy="583.500" r="3.200" fill="#4885ed"/>
<ellipse cx="579" cy="585" rx="8" ry="6.500" fill="#c8c8b0"/><circle cx="575" cy="583" r="1.500" fill="#d33"/><circle cx="579" cy="582" r="1.500" fill="#38c"/><circle cx="583" cy="585" r="1.500" fill="#4a4"/><path d="M583 583l5-9" stroke="#e0b040" stroke-width="2"/>
<rect x="600" y="568" width="38" height="26" fill="#4b4a49"/>
<rect x="610" y="574" width="18" height="19" rx="4" fill="#f4f4f4"/><path d="M619 577q5 2 5 7q0 5-5 6q-5-1-5-6q0-4 5-7z" fill="#e25a3c"/><path d="M619 581q4 3 3 7q-2 2-4 1q-3-3 1-8z" fill="#4aa8c8"/><circle cx="616" cy="586" r="2" fill="#7bc043"/>
<path d="M797 576a8 8 0 1 0 6 13a8 8 0 0 1-6-13z" fill="#f2c744"/>
<text x="810" y="588" font-size="11" fill="#e6e6e6">71°F</text>
<path d="M846 587l4.500-4.500l4.500 4.500" fill="none" stroke="#e6e6e6" stroke-width="1.200"/>
<rect x="865" y="580" width="7" height="8" rx="1" fill="none" stroke="#ddd"/><path d="M866 578h5M866 590h5M872 583l2-1v4l-2-1" fill="none" stroke="#ddd"/>
<rect x="884" y="581" width="11" height="7" fill="#ccc"/><path d="M881 579h5v2" stroke="#ddd" fill="none"/>
<path d="M901 582h2l3-3v10l-3-3h-2zM909 581q2 3 0 6" fill="none" stroke="#ccc"/>
<path d="M922 589a7 7 0 0 1 9-9M925 589a4 4 0 0 1 5-5" fill="none" stroke="#999"/><circle cx="929" cy="588" r="1.500" fill="#ccc"/>
<text x="939" y="587" font-size="9.500" fill="#e6e6e6">ENG</text>
<text x="987" y="580" font-size="9.500" fill="#e6e6e6" text-anchor="middle">7:08 PM</text>
<text x="987" y="594" font-size="9.500" fill="#e6e6e6" text-anchor="middle">10/23/2021</text>
<rect x="1021" y="578" width="3" height="10" fill="#f4f4f4"/>
</svg>
</body></html>
